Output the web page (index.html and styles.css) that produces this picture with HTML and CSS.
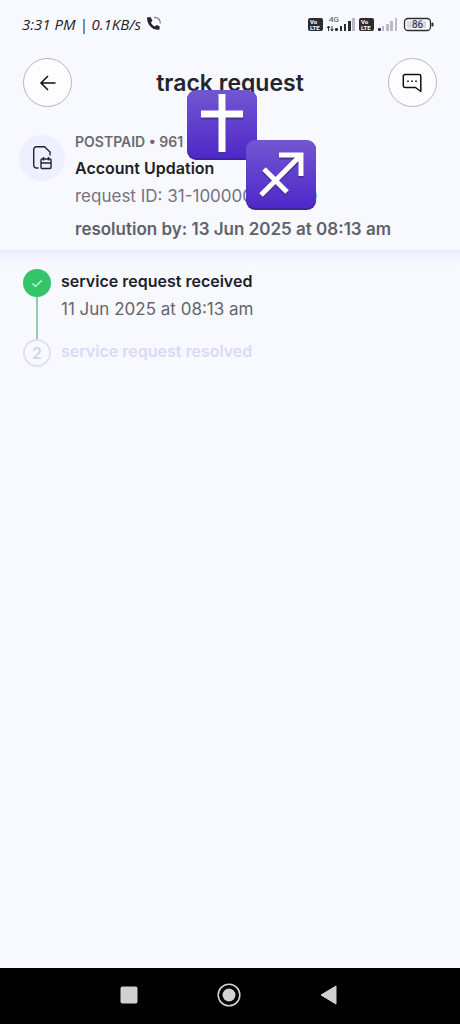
FILE: index.html
```html
<!DOCTYPE html>
<html lang="en">
<head>
<meta charset="utf-8">
<meta name="viewport" content="width=device-width, initial-scale=1">
<title>track request</title>
<link rel="stylesheet" href="styles.css">
</head>
<body>
<div class="app">
  <div class="status">
    <span class="clock">3:31 PM | 0.1KB/s</span>
    <svg class="call" width="16" height="16" viewBox="0 0 16 16"><path d="M1 1.500 4.500 1l2 3.700-1.600 1.700c.9 1.900 2.100 3.100 4 4.100l1.700-1.600 3.200 1.700-.5 3.200C6.500 14.500 1 9 1 1.500Z" fill="#25262d"/><path d="M8 1.500c3.500-.4 6.500 2 6.400 6" fill="none" stroke="#777982" stroke-width="1.300"/></svg>
    <svg class="signals" width="126" height="20" viewBox="0 0 126 20">
      <g fill="#2b2c32"><rect x="0" y="4" width="15" height="13" rx="2"/><rect x="51" y="4" width="15" height="13" rx="2"/></g>
      <g class="volte"><text x="2" y="10">Vo</text><text x="2" y="16">LTE</text><text x="53" y="10">Vo</text><text x="53" y="16">LTE</text></g>
      <text class="net" x="21" y="8">4G</text>
      <path d="M20.500 17v-5m-1.500 2 1.500-2 1.500 2M24 12v5m-1.500-2 1.500 2 1.500-2" fill="none" stroke="#2b2c32"/>
      <g fill="#2b2c32"><rect x="27" y="14" width="3" height="3" rx="1"/><rect x="32" y="12" width="2" height="5"/><rect x="36" y="10" width="2" height="7"/><rect x="40" y="7" width="3" height="10"/><rect x="70" y="14" width="3" height="3" rx="1"/></g>
      <g fill="#b9bac5"><rect x="44" y="4" width="3" height="13"/><rect x="74" y="12" width="2" height="5"/><rect x="78" y="10" width="3" height="7"/><rect x="82" y="7" width="3" height="10"/><rect x="87" y="4" width="2" height="13"/></g>
      <rect x="96.500" y="4.500" width="26" height="12" rx="3.500" fill="#fafaff" stroke="#2b2c32" stroke-width="1.300"/>
      <rect x="99" y="7" width="19" height="7" rx="1" fill="#d7d8e8"/><rect x="123.500" y="8.500" width="2" height="4" rx="1" fill="#2b2c32"/>
      <text class="charge" x="109.500" y="14">86</text>
    </svg>
  </div>
  <header class="top">
    <button class="round" aria-label="Back"><svg width="24" height="24" viewBox="0 0 24 24"><path d="M19.500 12H5M12 5l-7 7 7 7" fill="none" stroke="#111" stroke-width="1.500"/></svg></button>
    <h1>track request</h1>
    <button class="round" aria-label="Chat"><svg width="24" height="24" viewBox="0 0 24 24"><path d="M20.800 20.500V5.200a1.700 1.700 0 0 0-1.700-1.700H5A1.700 1.700 0 0 0 3.300 5.200v9.600A1.700 1.700 0 0 0 5 16.500h10.500Z" fill="none" stroke="#111" stroke-width="1.500" stroke-linejoin="round"/><path d="M7.200 10.200h1.600m2.400 0h1.600m2.400 0h1.600" stroke="#111" stroke-width="1.500"/></svg></button>
  </header>
  <section class="summary">
    <div class="badge"><svg width="24" height="26" viewBox="0 0 24 26"><g fill="none" stroke="#20222f" stroke-width="1.400"><path d="M8.500 23H6.500a2.800 2.800 0 0 1-2.800-2.800V4.500a2.800 2.800 0 0 1 2.800-2.800h8L20 7v3.500"/><rect x="11" y="14" width="10" height="9.500" rx="1"/><path d="M11 18h10M13.500 12v3.500M18.500 12v3.500"/></g></svg></div>
    <div class="info">
      <p class="plan">POSTPAID • 961</p>
      <h2>Account Updation</h2>
      <p class="ident">request ID: 31-100000000000</p>
      <p class="due">resolution by: 13 Jun 2025 at 08:13 am</p>
    </div>
    <svg class="sticker cross" viewBox="0 0 70 70" role="img" aria-label="Cross">
      <defs><linearGradient id="violet" x2="0" y2="1"><stop stop-color="#7256d2"/><stop offset="1" stop-color="#4f28c8"/></linearGradient></defs>
      <rect y="1" width="70" height="69" rx="9" fill="#3e259c"/><rect width="70" height="68" rx="9" fill="url(#violet)"/>
      <path d="M35 6v57M14 26h42" stroke="#493394" stroke-width="7"/><path d="M35 4v58M14 24h42" stroke="#fff" stroke-width="7"/>
    </svg>
    <svg class="sticker archer" viewBox="0 0 70 70" role="img" aria-label="Sagittarius">
      <rect y="1" width="70" height="69" rx="9" fill="#3e259c"/><rect width="70" height="68" rx="9" fill="url(#violet)"/>
      <path d="M15 57 54 18M18 31l23 23M33 17h22v21" fill="none" stroke="#493394" stroke-width="5"/><path d="M15 55 54 16M18 29l23 23M33 15h22v21" fill="none" stroke="#fff" stroke-width="5"/>
    </svg>
  </section>
  <main>
    <ol class="steps">
      <li class="step done">
        <div class="rail"><span class="dot"><svg width="12" height="12" viewBox="0 0 12 12"><path d="m1.500 6.500 3 3 6-6" fill="none" stroke="#d8ffe4" stroke-width="1.200"/></svg></span></div>
        <div class="detail"><h3>service request received</h3><p>11 Jun 2025 at 08:13 am</p></div>
      </li>
      <li class="step pending">
        <div class="rail"><span class="dot">2</span></div>
        <div class="detail"><h3>service request resolved</h3></div>
      </li>
    </ol>
  </main>
  <nav class="keys">
    <button aria-label="Recent apps"><svg width="24" height="24" viewBox="0 0 24 24"><rect x="3.500" y="3.500" width="17" height="17" rx="2" fill="#d1d1d1"/></svg></button>
    <button aria-label="Home"><svg width="24" height="24" viewBox="0 0 24 24"><circle cx="12" cy="12" r="10.800" fill="none" stroke="#d1d1d1" stroke-width="1.600"/><circle cx="12" cy="12" r="6.500" fill="#d1d1d1"/></svg></button>
    <button aria-label="Back"><svg width="24" height="24" viewBox="0 0 24 24"><path d="M19 3v18L4 12Z" fill="#d1d1d1" stroke="#d1d1d1" stroke-linejoin="round"/></svg></button>
  </nav>
</div>
</body>
</html>
```
FILE: styles.css
```css
* { box-sizing: border-box; margin: 0; padding: 0; }
body { background: #f8f8ff; color: #1d1e27; font-family: Inter, "Liberation Sans", sans-serif; font-size: 16px; line-height: 24px; }
svg { display: block; flex: none; }
button { border: 0; background: none; display: grid; place-items: center; }
.app { min-height: 100vh; display: flex; flex-direction: column; }
.status { display: flex; align-items: center; height: 48px; padding: 0 26px 0 22px; gap: 5px; }
.clock { font-family: "Open Sans", sans-serif; font-style: italic; font-size: 15px; white-space: nowrap; }
.signals { margin-left: auto; }
.volte { fill: #fff; font: bold 6px Roboto, sans-serif; }
.net { fill: #444650; font: 8px Roboto, sans-serif; }
.charge { fill: #2b2c32; font: 10px Roboto, sans-serif; text-anchor: middle; }
.top { display: flex; align-items: center; justify-content: space-between; padding: 10px 23px 0; }
.round { width: 49px; height: 49px; border: 1px solid #b6b6bd; border-radius: 50%; background: #fdfdff; }
h1 { font-size: 23px; line-height: 32px; font-weight: 600; color: #24252e; }
.summary { position: relative; display: flex; gap: 10px; padding: 23px 19px 7px; }
.summary::after { content: ""; position: absolute; top: 100%; left: 0; right: 0; height: 16px; background: linear-gradient(#eceefd, #f8f8ff); }
.badge { display: grid; place-items: center; width: 46px; height: 46px; margin-top: 5px; border-radius: 50%; background: #eef0ff; flex: none; }
.plan { font-size: 14px; font-weight: 600; color: #696b73; }
h2, h3 { font-size: 16px; line-height: 28px; font-weight: 600; }
.ident { font-size: 17px; line-height: 28px; color: #73757d; }
.due { padding-top: 5px; font-size: 17px; line-height: 28px; font-weight: 600; color: #60626b; }
.sticker { position: absolute; width: 70px; height: 70px; }
.cross { left: 187px; top: -17px; }
.archer { left: 246px; top: 33px; }
main { flex: 1; padding: 19px 23px; }
.steps { list-style: none; }
.step { display: flex; gap: 10px; }
.rail { display: flex; flex-direction: column; align-items: center; }
.dot { display: grid; place-items: center; width: 28px; height: 28px; border-radius: 50%; font-weight: 600; }
.done .dot { background: #34c568; }
.done .rail::after { content: ""; flex: 1; width: 2px; background: #8ad3aa; }
.done .detail { padding-bottom: 16px; }
.detail { margin-top: -2px; }
.detail p { font-size: 17px; line-height: 28px; color: #64666e; }
.pending .dot { border: 2px solid #dfe1f3; color: #d3d5ec; }
.pending h3 { color: #d9dbf6; }
.keys { display: flex; justify-content: center; align-items: center; gap: 76px; height: 56px; padding: 0 2px 2px 0; background: #000; }
```
